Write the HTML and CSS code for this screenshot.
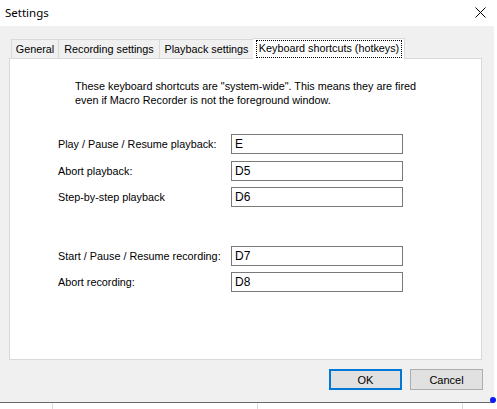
FILE: index.html
```html
<!DOCTYPE html>
<html>
<head>
<meta charset="utf-8">
<link rel="stylesheet" href="styles.css">
</head>
<body>
<div class="window">
  <div class="titlebar">
    <span class="title">Settings</span>
    <svg class="close" width="11" height="11" viewBox="0 0 11 11"><path d="M0.5 0.5 L10.5 10.5 M10.5 0.5 L0.5 10.5" stroke="#000" stroke-width="1" fill="none"/></svg>
  </div>
  <div class="body">
    <div class="tabs">
      <div class="tab tab-general">General</div>
      <div class="tab tab-rec">Recording settings</div>
      <div class="tab tab-play">Playback settings</div>
      <div class="tab tab-active"><span class="focus">Keyboard shortcuts (hotkeys)</span></div>
    </div>
    <div class="panel">
      <p class="note">These keyboard shortcuts are "system-wide". This means they are fired<br>even if Macro Recorder is not the foreground window.</p>
      <div class="form">
        <div class="row"><span class="label">Play / Pause / Resume playback:</span><span class="input">E</span></div>
        <div class="row r2"><span class="label">Abort playback:</span><span class="input">D5</span></div>
        <div class="row r3"><span class="label">Step-by-step playback</span><span class="input">D6</span></div>
        <div class="row r4"><span class="label">Start / Pause / Resume recording:</span><span class="input">D7</span></div>
        <div class="row r3"><span class="label">Abort recording:</span><span class="input">D8</span></div>
      </div>
    </div>
    <div class="buttons">
      <button class="btn btn-ok">OK</button>
      <button class="btn">Cancel</button>
    </div>
  </div>
  <div class="taskbar">
    <span class="tick t1"></span>
    <span class="tick t2"></span>
    <span class="tick t3"></span>
  </div>
  <span class="dot"></span>
</div>
</body>
</html>
```
FILE: styles.css
```css
* { box-sizing: border-box; }
html, body { margin: 0; padding: 0; background: #fff; }
body { font-family: "Liberation Sans", Arial, sans-serif; font-size: 10.8px; color: #000; }
.window { position: relative; width: 497px; height: 409px; }
.titlebar { height: 26px; background: #fff; display: flex; align-items: center; justify-content: space-between; padding: 0 11px 0 5px; }
.title { font-family: "Noto Sans", "Liberation Sans", sans-serif; font-size: 11.5px; margin-top: -1px; }
.close { display: block; margin-top: -2px; }
.body { width: 494px; height: 377px; background: #f0f0f0; border-bottom: 1px solid #6a6a6a; padding-top: 12px; }
.tabs { display: flex; align-items: flex-end; height: 20px; padding-left: 11px; position: relative; z-index: 1; }
.tab { height: 19px; border: 1px solid #d9d9d9; border-bottom: none; background: #f0f0f0; padding: 3px 0 0 0; text-align: center; white-space: nowrap; }
.tab + .tab { border-left: none; }
.tab-general { width: 48px; }
.tab-rec { width: 101px; }
.tab-play { width: 94px; }
.tab-active { width: 152px; height: 21px; margin-left: -1px; margin-bottom: -1px; border: 1px solid #d9d9d9; border-bottom: none; background: #fff; padding: 1px 2px 0 3px; }
.focus { display: block; border: 1px dotted #000; height: 18px; line-height: 15px; }
.panel { margin-left: 9px; width: 473px; height: 302px; background: #fff; border: 1px solid #d9d9d9; padding: 20px 0 0 0; }
.note { margin: 0 0 0 65px; line-height: 14px; }
.form { margin-top: 27px; margin-left: 48px; }
.row { display: flex; align-items: center; height: 20px; }
.r2 { margin-top: 7px; }
.r3 { margin-top: 6px; }
.r4 { margin-top: 39px; }
.label { width: 173px; }
.input { width: 172px; height: 20px; border: 1px solid #7a7a7a; padding: 0 0 0 3px; line-height: 18px; font-size: 12px; }
.buttons { display: flex; justify-content: flex-end; gap: 8px; padding: 9px 11px 0 0; }
.btn { width: 73px; height: 21px; background: #e1e1e1; border: 1px solid #adadad; font-family: "Liberation Sans", Arial, sans-serif; font-size: 11px; padding: 0; color: #000; }
.btn-ok { border: 2px solid #0078d7; }
.taskbar { position: relative; height: 6px; }
.tick { position: absolute; top: 0; width: 1px; height: 6px; background: #dcdcdc; }
.t1 { left: 52px; }
.t2 { left: 257px; }
.t3 { left: 462px; }
.dot { position: absolute; left: 490px; top: 397px; width: 6px; height: 6px; border-radius: 50%; background: #0a1aff; }
```
